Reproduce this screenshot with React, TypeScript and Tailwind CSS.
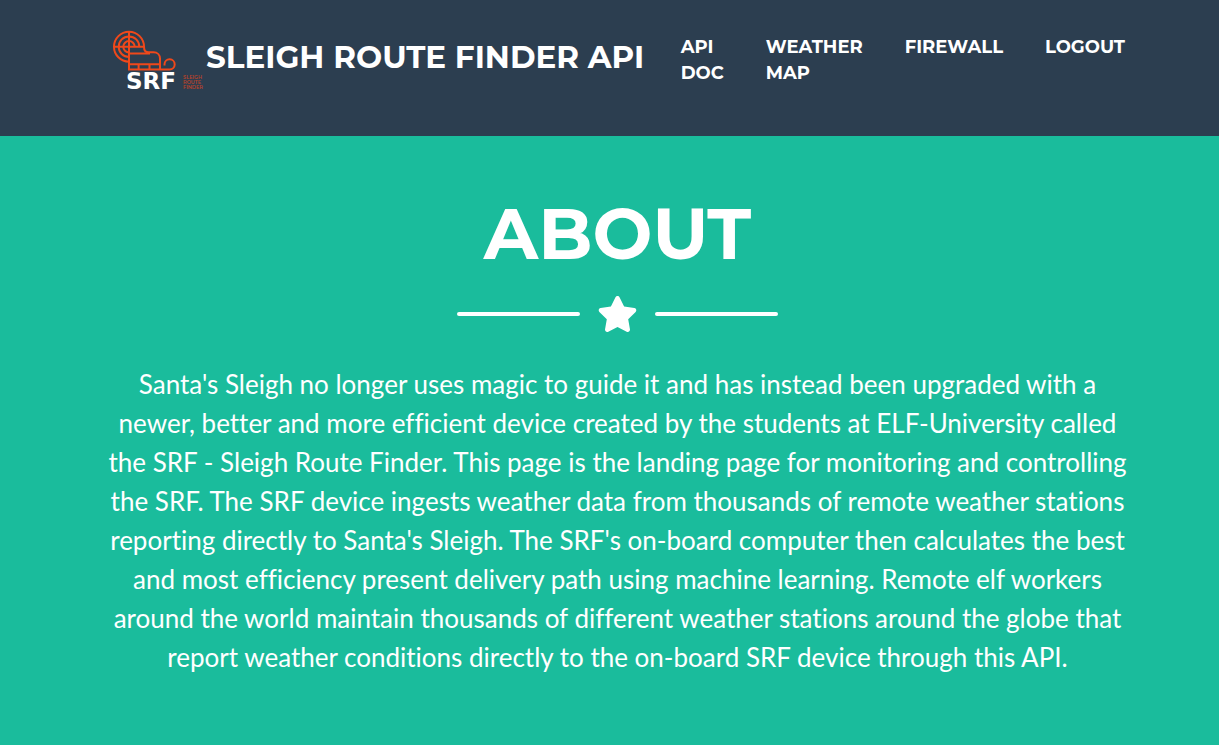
import { FaStar } from "react-icons/fa";

const links = ["API DOC", "WEATHER MAP", "FIREWALL", "LOGOUT"];

const heading = "font-['Montserrat','Inter',sans-serif] font-bold";

function Logo() {
  return (
    <svg viewBox="0 0 96 72" className="h-[72px] w-24 shrink-0" role="img" aria-label="SRF Sleigh Route Finder">
      <g fill="none" stroke="#f0481a" strokeWidth="2">
        <path d="M19 33.7A15 15 0 1 1 34 18.7C34 22.500 35 24.300 38.500 24.300H43.500C47.500 24.300 50 27 50 30.500V41.500" />
        <path d="M19 29A10.300 10.300 0 1 1 29.300 18.700" />
        <path d="M19 24.400A5.700 5.700 0 1 1 24.700 18.700" />
        <path d="M4 18.700H34M19 3.700V41.500M19 25.600H40" />
        <path d="M18 36.300H50M18 41.500H59.500A5.100 5.100 0 1 0 54.500 36.300V37.500M28.600 36.300V41.500M39.500 36.300V41.500" />
      </g>
      <text x="16" y="61" fontSize="23" fontWeight="700" fontFamily="'DejaVu Sans', sans-serif" fill="#fff">SRF</text>
      <g fontSize="5" fontWeight="600" fontFamily="'Montserrat', 'DejaVu Sans', sans-serif" fill="#b8432a">
        <text x="73" y="51">SLEIGH</text>
        <text x="73" y="56">ROUTE</text>
        <text x="73" y="61">FINDER</text>
      </g>
    </svg>
  );
}

export default function App() {
  return (
    <div className="flex min-h-screen flex-col bg-[#1abc9c] text-white">
      <header className="bg-[#2c3e50] pl-4">
        <div className="mx-auto flex max-w-[1031px] items-start justify-between px-2 pt-7 pb-9">
          <a href="#top" className="flex items-start">
            <Logo />
            <span className={`${heading} text-[31px] leading-[58px] whitespace-nowrap`}>SLEIGH ROUTE FINDER API</span>
          </a>
          <nav className="flex gap-[42px] pt-1.5">
            {links.map((label) => (
              <a key={label} href="#top" className={`${heading} w-min text-lg leading-[26px]`}>
                {label}
              </a>
            ))}
          </nav>
        </div>
      </header>
      <main className="pl-4">
        <section className="mx-auto flex max-w-[1031px] flex-col items-center pt-[62px] pb-16">
          <h1 className={`${heading} text-[71px] leading-[72px]`}>ABOUT</h1>
          <div className="mt-[26px] flex items-center gap-4">
            <span className="h-1 w-[123px] rounded-full bg-white" />
            <FaStar className="h-9 w-[43px]" aria-hidden="true" />
            <span className="h-1 w-[123px] rounded-full bg-white" />
          </div>
          <p className="mt-[33px] text-center font-['Lato',sans-serif] text-[26px] leading-[39px] [font-variant-ligatures:none]">
            Santa's Sleigh no longer uses magic to guide it and has instead been upgraded with a newer, better and
            more efficient device created by the students at ELF-University called the SRF - Sleigh Route Finder. This
            page is the landing page for monitoring and controlling the SRF. The SRF device ingests weather data from
            thousands of remote weather stations reporting directly to Santa's Sleigh. The SRF's on-board computer
            then calculates the best and most efficiency present delivery path using machine learning. Remote elf
            workers around the world maintain thousands of different weather stations around the globe that report
            weather conditions directly to the on-board SRF device through this API.
          </p>
        </section>
      </main>
    </div>
  );
}
